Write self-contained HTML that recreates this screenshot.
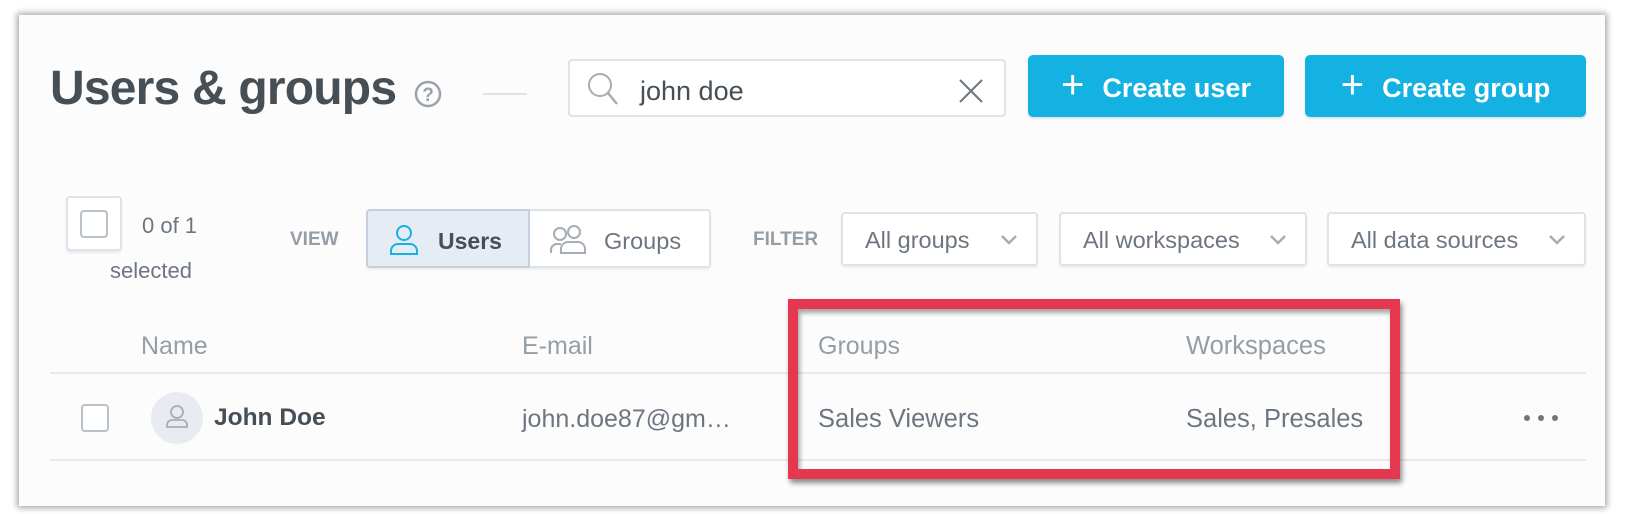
<!DOCTYPE html>
<html><head><meta charset="utf-8"><style>
*{box-sizing:border-box;margin:0;padding:0}
body{width:1626px;height:514px;background:#fff;position:relative;overflow:hidden;font-family:"Liberation Sans",sans-serif;color:#464e56}
.card{position:absolute;left:19px;top:15px;width:1586px;height:491px;background:#fcfcfd;box-shadow:0 0 6px 2px rgba(0,0,0,.35)}
.a{position:absolute;white-space:nowrap}
.box{position:absolute;border:2px solid #dde3ea;border-radius:4px;background:#fff}
.btn{position:absolute;background:#14b2e2;border-radius:5px;color:#fff;font-weight:bold;font-size:27px;display:flex;align-items:center;justify-content:center;box-shadow:0 2px 2px rgba(0,0,0,.1);padding-top:4px}
.dd{position:absolute;top:212px;height:54px;border:2px solid #dde3ea;border-radius:4px;background:#fff;font-size:23.5px;color:#6d7680;display:flex;align-items:center;padding-left:22px;padding-top:2px;box-shadow:0 2px 2px rgba(0,0,0,.06)}
.dd svg{position:absolute;right:18px;top:20px}
.gray{color:#8a939c}
</style></head><body>
<div class="card"></div>
<div class="a" style="left:50px;top:61px;font-size:48px;font-weight:bold;color:#464e56;letter-spacing:-0.8px">Users &amp; groups</div>
<svg class="a" style="left:414px;top:80px" width="28" height="28"><circle cx="14" cy="14" r="12" fill="none" stroke="#9aa2aa" stroke-width="2.5"/><text x="14" y="21" text-anchor="middle" font-size="19" font-weight="bold" fill="#9aa2aa" font-family="Liberation Sans">?</text></svg>
<div class="a" style="left:483px;top:93px;width:44px;height:2px;background:#dde3ea"></div>
<div class="box" style="left:568px;top:59px;width:438px;height:58px"></div>
<svg class="a" style="left:586px;top:71px" width="34" height="36"><circle cx="14" cy="14" r="11" fill="none" stroke="#a6adb4" stroke-width="2"/><line x1="22" y1="22" x2="31" y2="33" stroke="#a6adb4" stroke-width="2.5"/></svg>
<div class="a" style="left:640px;top:76px;font-size:27px;color:#464e56">john doe</div>
<svg class="a" style="left:958px;top:78px" width="26" height="26"><path d="M2 2L24 24M24 2L2 24" stroke="#6d7680" stroke-width="2"/></svg>
<div class="btn" style="left:1028px;top:55px;width:256px;height:62px"><span style="font-weight:normal;font-size:40px;margin-right:18px;margin-top:-6px">+</span>Create user</div>
<div class="btn" style="left:1305px;top:55px;width:281px;height:62px"><span style="font-weight:normal;font-size:40px;margin-right:18px;margin-top:-6px">+</span>Create group</div>
<div class="box" style="left:66px;top:196px;width:56px;height:55px;box-shadow:0 2px 2px rgba(0,0,0,.08)"></div>
<div class="box" style="left:80px;top:210px;width:28px;height:28px;border-color:#b8c0c8"></div>
<div class="a gray" style="left:142px;top:213px;font-size:22px;color:#6d7680">0 of 1</div>
<div class="a gray" style="left:110px;top:258px;font-size:22px;color:#6d7680">selected</div>
<div class="a gray" style="left:290px;top:229px;font-size:19px;font-weight:bold;color:#959da5">VIEW</div>
<div class="a" style="left:366px;top:209px;width:345px;height:59px;border:2px solid #dde3ea;border-radius:4px;background:#fff;box-shadow:0 2px 2px rgba(0,0,0,.06)"></div>
<div class="a" style="left:366px;top:209px;width:164px;height:59px;border:2px solid #c6d0dc;border-radius:4px 0 0 4px;background:#e6ecf3"></div>
<svg class="a" style="left:388px;top:224px" width="32" height="32"><circle cx="16" cy="9" r="7" fill="none" stroke="#14b2e2" stroke-width="2"/><path d="M3 30v-3a7 7 0 0 1 7-7h12a7 7 0 0 1 7 7v3z" fill="none" stroke="#14b2e2" stroke-width="2"/></svg>
<div class="a" style="left:438px;top:228px;font-size:23px;font-weight:bold;color:#464e56">Users</div>
<svg class="a" style="left:549px;top:224px" width="40" height="32"><circle cx="11" cy="10" r="6" fill="none" stroke="#a6adb4" stroke-width="2"/><circle cx="25" cy="8" r="6" fill="none" stroke="#a6adb4" stroke-width="2"/><path d="M2 29v-3a6 6 0 0 1 6-6h4" fill="none" stroke="#a6adb4" stroke-width="2"/><path d="M12 29v-4a7 7 0 0 1 7-7h10a7 7 0 0 1 7 7v4z" fill="none" stroke="#a6adb4" stroke-width="2"/></svg>
<div class="a" style="left:604px;top:228px;font-size:23.5px;color:#6d7680">Groups</div>
<div class="a" style="left:753px;top:229px;font-size:19px;font-weight:bold;color:#959da5">FILTER</div>
<div class="dd" style="left:841px;width:197px">All groups<svg width="18" height="12"><path d="M2 2l7 7 7-7" fill="none" stroke="#a6adb4" stroke-width="2.5"/></svg></div>
<div class="dd" style="left:1059px;width:248px">All workspaces<svg width="18" height="12"><path d="M2 2l7 7 7-7" fill="none" stroke="#a6adb4" stroke-width="2.5"/></svg></div>
<div class="dd" style="left:1327px;width:259px">All data sources<svg width="18" height="12"><path d="M2 2l7 7 7-7" fill="none" stroke="#a6adb4" stroke-width="2.5"/></svg></div>
<div class="a" style="left:141px;top:332px;font-size:25px;color:#959da5">Name</div>
<div class="a" style="left:522px;top:332px;font-size:25px;color:#959da5">E-mail</div>
<div class="a" style="left:818px;top:332px;font-size:25px;color:#959da5">Groups</div>
<div class="a" style="left:1186px;top:332px;font-size:25.5px;color:#959da5">Workspaces</div>
<div class="a" style="left:50px;top:372px;width:1536px;height:2px;background:#e6eaee"></div>
<div class="box" style="left:81px;top:404px;width:28px;height:28px;border-color:#b8c0c8"></div>
<svg class="a" style="left:150px;top:391px" width="54" height="54"><circle cx="27" cy="27" r="26" fill="#e8ecf1"/><circle cx="27" cy="21" r="6" fill="none" stroke="#a6adb4" stroke-width="1.8"/><path d="M17 36v-2a5 5 0 0 1 5-5h10a5 5 0 0 1 5 5v2z" fill="none" stroke="#a6adb4" stroke-width="1.8"/></svg>
<div class="a" style="left:214px;top:404px;font-size:24.5px;font-weight:bold;color:#464e56">John Doe</div>
<div class="a" style="left:522px;top:405px;font-size:25px;color:#6d7680">john.doe87@gm…</div>
<div class="a" style="left:818px;top:405px;font-size:25.5px;color:#6d7680">Sales Viewers</div>
<div class="a" style="left:1186px;top:405px;font-size:25.5px;color:#6d7680">Sales, Presales</div>
<svg class="a" style="left:1522px;top:413px" width="40" height="10"><circle cx="5" cy="5" r="3" fill="#6d7680"/><circle cx="19" cy="5" r="3" fill="#6d7680"/><circle cx="33" cy="5" r="3" fill="#6d7680"/></svg>
<div class="a" style="left:50px;top:459px;width:1536px;height:2px;background:#e6eaee"></div>
<div class="a" style="left:788px;top:299px;width:612px;height:180px;border:10px solid #e5384f;box-shadow:2px 4px 5px rgba(0,0,0,.45),inset 2px 4px 5px rgba(0,0,0,.35)"></div>
</body></html>
